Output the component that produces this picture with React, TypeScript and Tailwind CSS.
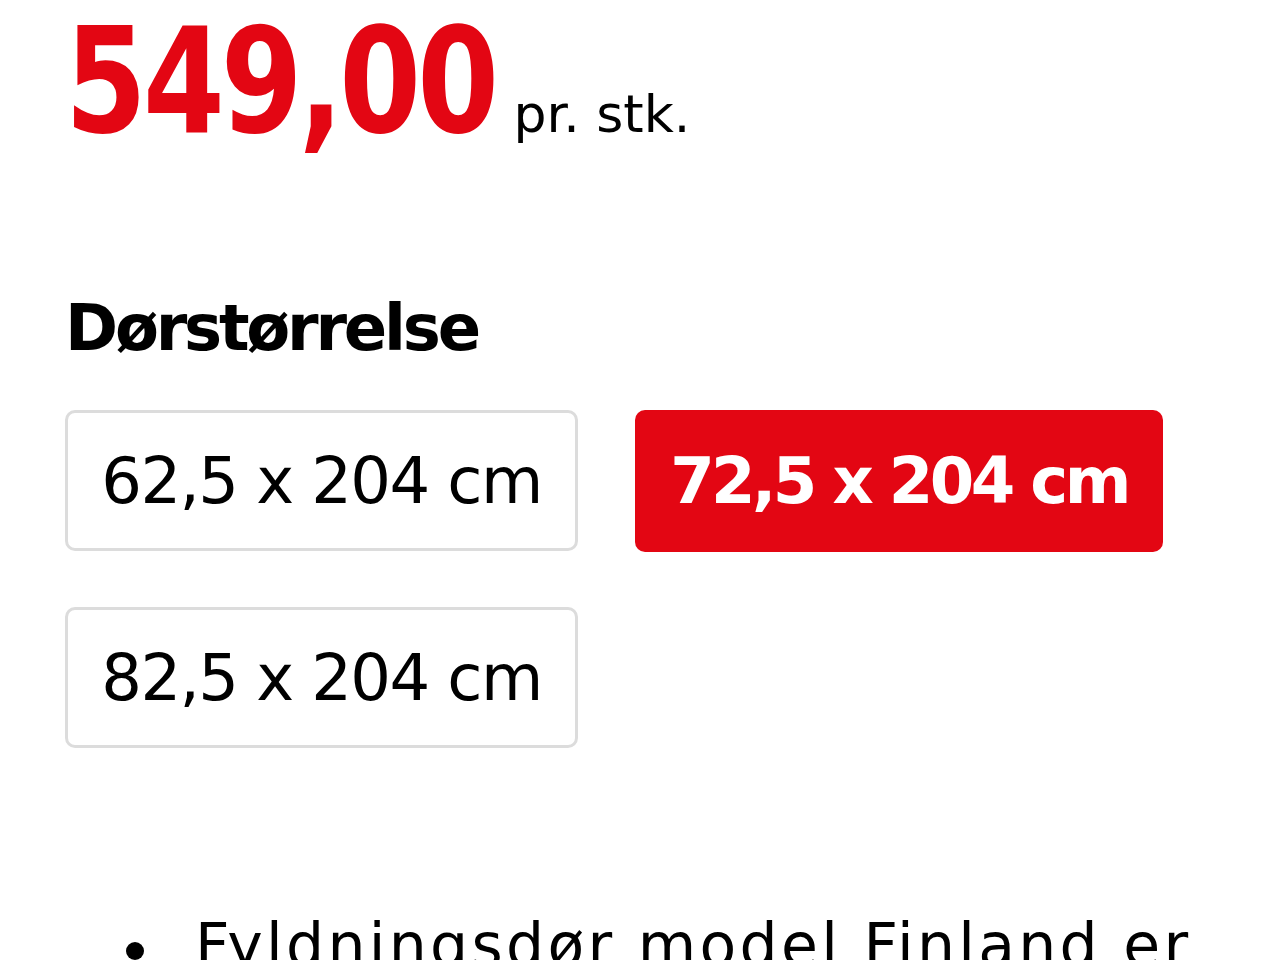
const sizes = [
  { label: "62,5 x 204 cm", active: false },
  { label: "72,5 x 204 cm", active: true },
  { label: "82,5 x 204 cm", active: false },
];

export default function App() {
  return (
    <div className="min-h-[960px] overflow-hidden bg-white pl-[65px] text-black">
      {/* price row */}
      <div className="flex items-end pt-[8px]">
        <span
          className="mr-[-52px] inline-block origin-left scale-x-[0.895] text-[146px] leading-none font-bold tracking-[-0.03em] text-[#e30613]"
          style={{ fontFamily: '"DejaVu Sans Condensed", "DejaVu Sans", sans-serif', fontStretch: "condensed" }}
        >
          549,00
        </span>
        <span className="mb-[14px] ml-[20px] font-['DejaVu_Sans',sans-serif] text-[52px] leading-none">pr. stk.</span>
      </div>

      <h2 className="mt-[142px] font-['DejaVu_Sans',sans-serif] text-[64px] leading-none font-bold tracking-[-0.05em]">
        Dørstørrelse
      </h2>

      <div className="mt-[50px] flex w-[1100px] flex-wrap items-start gap-x-[57px] gap-y-[55px]">
        {sizes.map((s) => (
          <button
            key={s.label}
            className={
              s.active
                ? "flex h-[142px] w-[528px] items-center justify-center rounded-[10px] bg-[#e30613] font-['DejaVu_Sans',sans-serif] text-[64px] font-bold tracking-[-0.056em] text-white"
                : "flex h-[141px] w-[513px] items-center justify-center rounded-[10px] border-[3px] border-[#dcdcdc] bg-white font-['DejaVu_Sans',sans-serif] text-[64px] tracking-[-0.025em]"
            }
          >
            {s.label}
          </button>
        ))}
      </div>

      <div className="mt-[160px] flex items-center pl-[61px] font-['DejaVu_Sans',sans-serif] text-[60px] leading-tight tracking-[0.055em]">
        <span className="mr-[51px] mt-[10px] h-[18px] w-[18px] shrink-0 rounded-full bg-black" />
        <span>Fyldningsdør model Finland er</span>
      </div>
    </div>
  );
}
